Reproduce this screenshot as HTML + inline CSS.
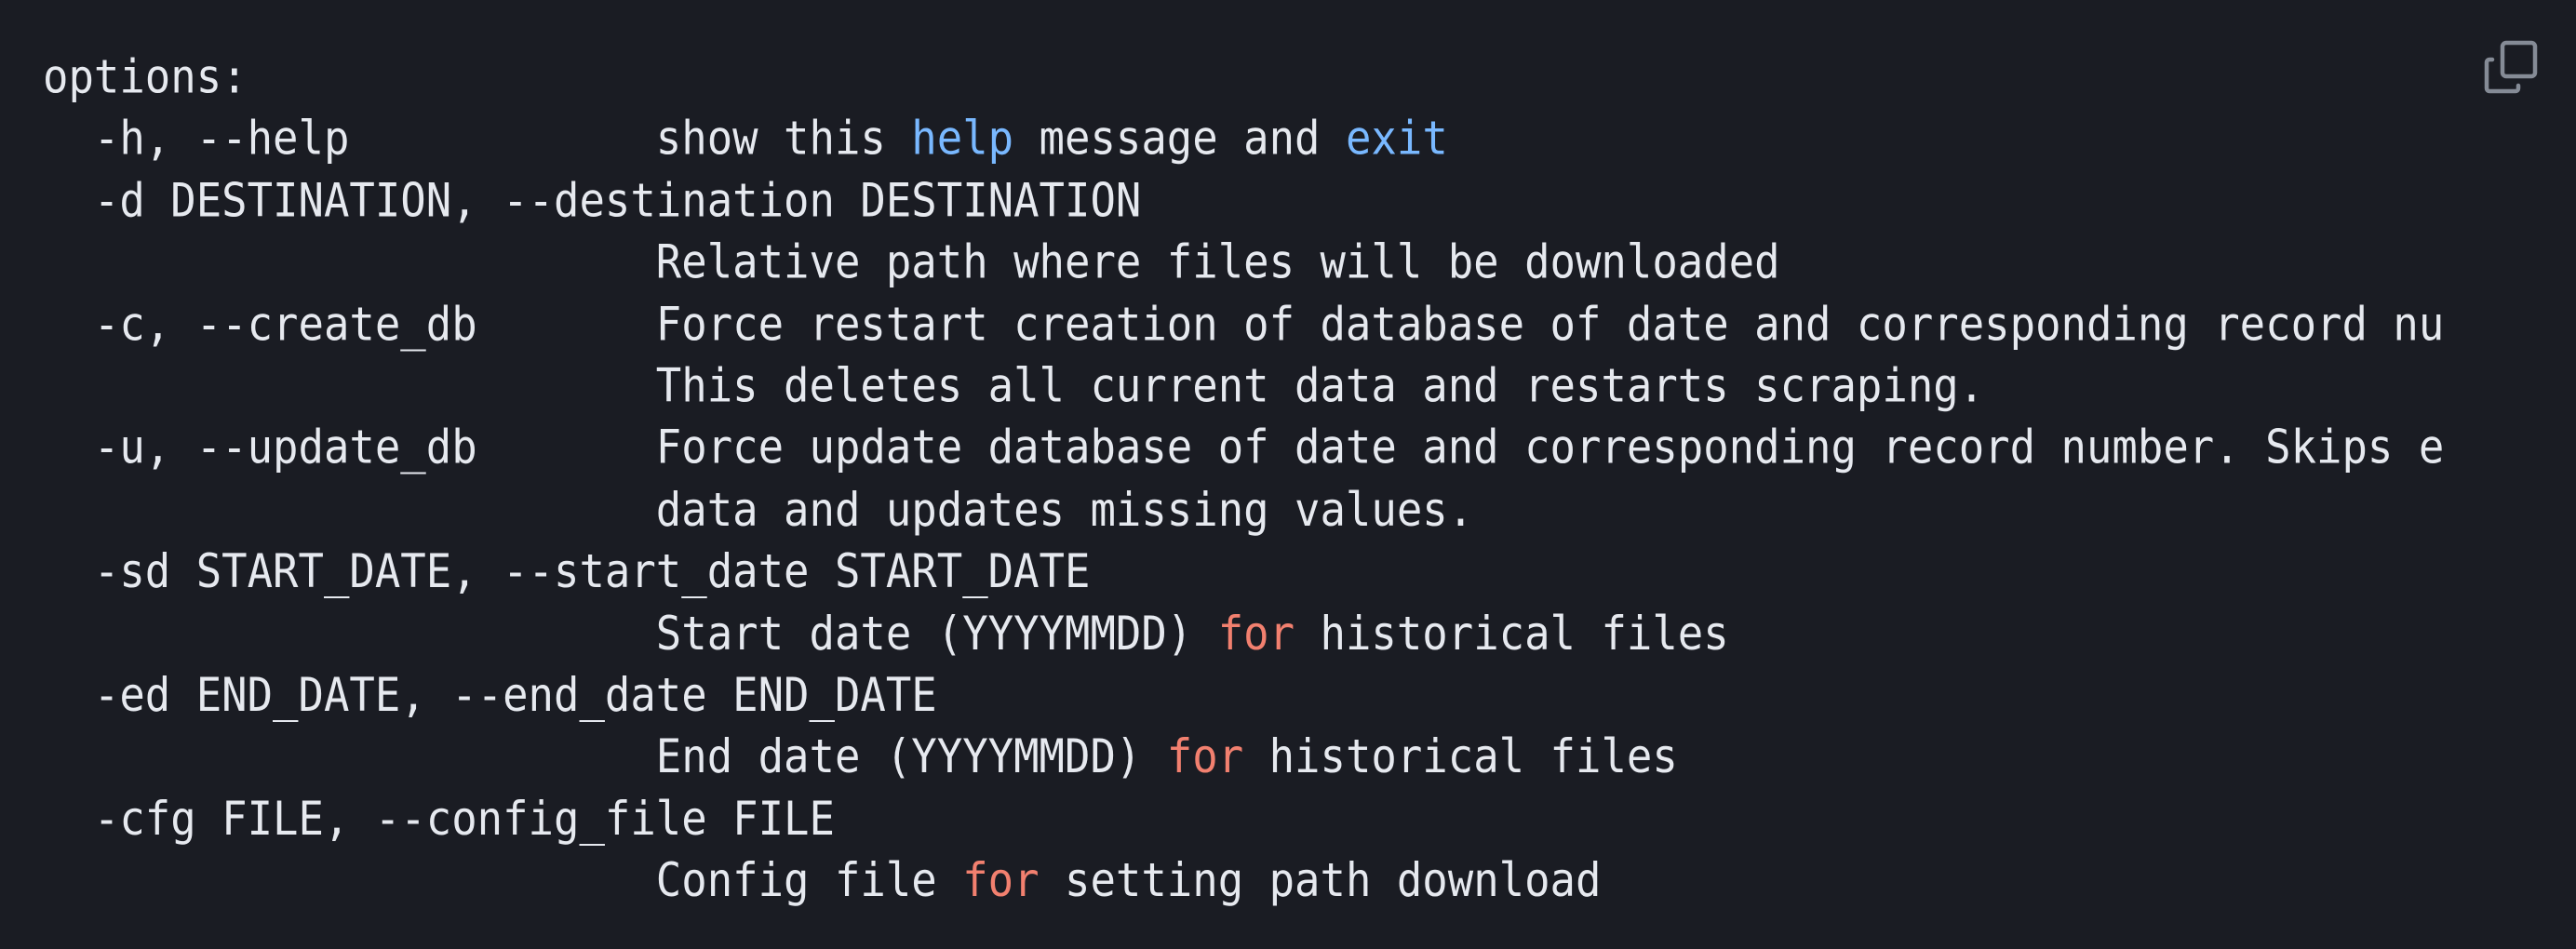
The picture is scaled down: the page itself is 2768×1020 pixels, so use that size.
<!DOCTYPE html>
<html><head><style>
html,body{margin:0;padding:0;background:#1a1c23;width:2768px;height:1020px;overflow:hidden}
.clip{position:absolute;left:0;top:0;width:2627px;height:1020px;overflow:hidden}
pre{position:absolute;left:46px;top:50px;margin:0;font-family:"DejaVu Sans Mono","Liberation Mono",monospace;font-size:45.6px;line-height:60.4px;color:#e6e9ef;white-space:pre;transform:scaleY(1.1);transform-origin:0 0}
.b{color:#79b8ff}.r{color:#f2806f}
</style></head><body>
<div class="clip"><pre>options:
  -h, --help            show this <span class="b">help</span> message and <span class="b">exit</span>
  -d DESTINATION, --destination DESTINATION
                        Relative path where files will be downloaded
  -c, --create_db       Force restart creation of database of date and corresponding record number.
                        This deletes all current data and restarts scraping.
  -u, --update_db       Force update database of date and corresponding record number. Skips existing
                        data and updates missing values.
  -sd START_DATE, --start_date START_DATE
                        Start date (YYYYMMDD) <span class="r">for</span> historical files
  -ed END_DATE, --end_date END_DATE
                        End date (YYYYMMDD) <span class="r">for</span> historical files
  -cfg FILE, --config_file FILE
                        Config file <span class="r">for</span> setting path download</pre></div>
<svg style="position:absolute;left:2666px;top:40px" width="64" height="62" viewBox="0 0 64 62" fill="none" stroke="#858b96" stroke-width="4.5" stroke-linecap="round" stroke-linejoin="round">
<rect x="23" y="6" width="35" height="36" rx="4"/>
<path d="M12 24 H9 a3 3 0 0 0 -3 3 V55 a3 3 0 0 0 3 3 H37 a3 3 0 0 0 3 -3 V52"/>
</svg>
</body></html>
